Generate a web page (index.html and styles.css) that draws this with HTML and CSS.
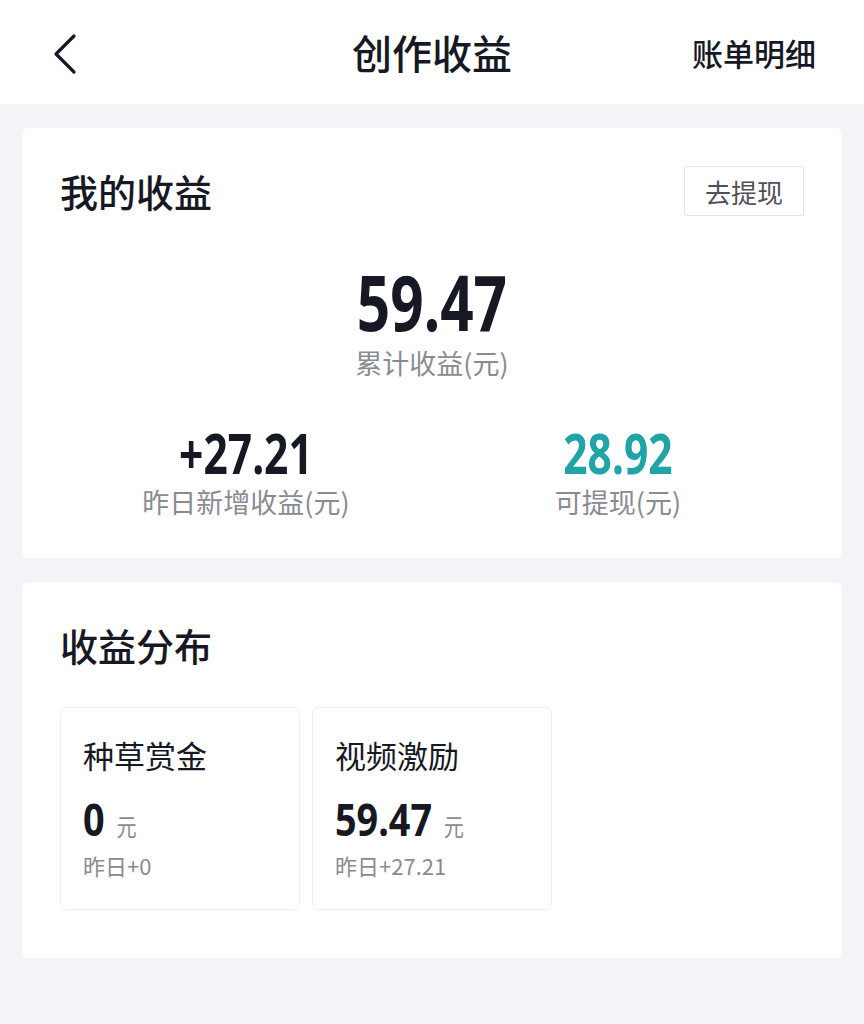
FILE: index.html
```html
<!DOCTYPE html>
<html lang="zh-CN">
<head>
    <meta charset="UTF-8">
    <meta name="viewport" content="width=device-width, initial-scale=1.0">
    <title>创作收益</title>
    <link rel="stylesheet" href="styles.css">
</head>
<body>

    <div class="topbar">
        <span class="back">
            <svg width="40" height="48" viewBox="0 0 40 48">
                <path d="M26 8 L8 26 L26 44" fill="none" stroke="#161823" stroke-width="3.2" stroke-linecap="round" stroke-linejoin="round"/>
            </svg>
        </span>
        <h1 class="title">创作收益</h1>
        <span class="bill">账单明细</span>
    </div>

    <div class="card income">
        <div class="card-head">
            <h2>我的收益</h2>
            <button class="withdraw">去提现</button>
        </div>

        <div class="total">
            <div class="num-row"><span class="num big">59.47</span></div>
            <div class="label">累计收益(元)</div>
        </div>

        <div class="pair">
            <div class="stat">
                <div class="num-row"><span class="num mid">+27.21</span></div>
                <div class="label">昨日新增收益(元)</div>
            </div>
            <div class="stat">
                <div class="num-row"><span class="num mid teal">28.92</span></div>
                <div class="label">可提现(元)</div>
            </div>
        </div>
    </div>

    <div class="card dist">
        <h2>收益分布</h2>
        <div class="tiles">
            <div class="tile">
                <div class="tile-name">种草赏金</div>
                <div class="tile-value"><span class="num small">0</span><span class="unit">元</span></div>
                <div class="tile-sub">昨日+0</div>
            </div>
            <div class="tile">
                <div class="tile-name">视频激励</div>
                <div class="tile-value"><span class="num small">59.47</span><span class="unit">元</span></div>
                <div class="tile-sub">昨日+27.21</div>
            </div>
        </div>
    </div>

</body>
</html>
```

FILE: styles.css
```css
body {
    margin: 0;
    padding: 0 0 40px;
    background-color: #f4f4f8;
    font-family: 'Noto Sans CJK SC', 'Noto Sans', sans-serif;
    color: #161823;
}

.topbar {
    height: 104px;
    background-color: #fff;
    display: flex;
    align-items: center;
    justify-content: space-between;
    padding: 0 48px 0 48px;
    box-sizing: border-box;
    position: relative;
}

.back {
    display: flex;
    width: 40px;
    height: 48px;
}

.title {
    position: absolute;
    left: 0;
    right: 0;
    top: 0;
    line-height: 104px;
    margin: 0;
    text-align: center;
    font-size: 40px;
    font-weight: 500;
    pointer-events: none;
}

.bill {
    font-size: 31px;
    font-weight: 500;
}

.card {
    background-color: #fff;
    margin: 24px 22px 0;
    border-radius: 6px;
    padding: 37px 38px 36px;
}

.card h2 {
    margin: 0;
    font-size: 38px;
    font-weight: 500;
    line-height: 52px;
}

.card-head {
    display: flex;
    justify-content: space-between;
    align-items: center;
}

.withdraw {
    width: 120px;
    height: 50px;
    border: 1px solid #e3e3e8;
    background: #fff;
    border-radius: 2px;
    font-family: inherit;
    font-size: 26px;
    color: #50505a;
    padding: 0;
}

/* no condensed face installed, so the digits get squeezed */
.num {
    font-family: 'Noto Sans', sans-serif;
    font-weight: bold;
    color: #161823;
}

.num-row {
    display: flex;
    justify-content: center;
}

.big,
.mid {
    display: inline-block;
    transform: scaleX(0.76);
}

.total {
    text-align: center;
    margin-top: 46px;
}

.total .num-row {
    margin-bottom: 3px;
}

.big {
    font-size: 77px;
    line-height: 77px;
}

.label {
    font-size: 27px;
    color: #8a8b91;
    line-height: 40px;
}

.pair {
    display: flex;
    margin-top: 41px;
}

.pair .num-row {
    margin-bottom: 2px;
}

.stat {
    flex: 1;
    text-align: center;
}

.mid {
    font-size: 56px;
    line-height: 56px;
}

.teal {
    color: #20a4a8;
}

.dist {
    padding-bottom: 48px;
}

.tiles {
    display: grid;
    grid-template-columns: repeat(3, 1fr);
    gap: 12px;
    margin-top: 36px;
}

.tile {
    border: 1px solid #f0f0f3;
    border-radius: 6px;
    padding: 25px 22px 28px;
}

.tile-name {
    font-size: 31px;
    line-height: 44px;
}

.tile-value {
    margin-top: 19px;
    display: flex;
    align-items: baseline;
    height: 45px;
    margin-bottom: 2px;
    transform: scaleX(0.84);
    transform-origin: left center;
}

.small {
    font-size: 45px;
    line-height: 45px;
}

.unit {
    font-size: 24px;
    color: #8a8b91;
    margin-left: 14px;
}

.tile-sub {
    margin-top: 8px;
    font-size: 22px;
    color: #8a8b91;
    line-height: 32px;
}
```
